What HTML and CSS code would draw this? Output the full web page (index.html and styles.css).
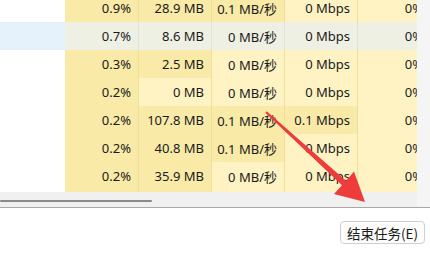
FILE: index.html
```html
<!DOCTYPE html>
<html lang="zh-CN">

<head>
    <meta charset="UTF-8">
    <meta name="viewport" content="width=device-width, initial-scale=1.0">
    <title>任务管理器</title>
    <link rel="stylesheet" href="styles.css">
</head>

<body>
    <div class="window">
        <div class="list-area">
            <div class="list">
                <div class="rows">
                    <div class="row">
                        <div class="cell name"></div>
                        <div class="cell mid">0.9%</div>
                        <div class="cell mid">28.9 MB</div>
                        <div class="cell mid">0.1 MB/秒</div>
                        <div class="cell low">0 Mbps</div>
                        <div class="cell low">0%</div>
                    </div>
                    <div class="row selected">
                        <div class="cell name"></div>
                        <div class="cell">0.7%</div>
                        <div class="cell">8.6 MB</div>
                        <div class="cell">0 MB/秒</div>
                        <div class="cell">0 Mbps</div>
                        <div class="cell">0%</div>
                    </div>
                    <div class="row">
                        <div class="cell name"></div>
                        <div class="cell mid">0.3%</div>
                        <div class="cell mid">2.5 MB</div>
                        <div class="cell low">0 MB/秒</div>
                        <div class="cell low">0 Mbps</div>
                        <div class="cell low">0%</div>
                    </div>
                    <div class="row">
                        <div class="cell name"></div>
                        <div class="cell mid">0.2%</div>
                        <div class="cell low">0 MB</div>
                        <div class="cell low">0 MB/秒</div>
                        <div class="cell low">0 Mbps</div>
                        <div class="cell low">0%</div>
                    </div>
                    <div class="row">
                        <div class="cell name"></div>
                        <div class="cell mid">0.2%</div>
                        <div class="cell mid">107.8 MB</div>
                        <div class="cell mid">0.1 MB/秒</div>
                        <div class="cell mid">0.1 Mbps</div>
                        <div class="cell low">0%</div>
                    </div>
                    <div class="row">
                        <div class="cell name"></div>
                        <div class="cell mid">0.2%</div>
                        <div class="cell mid">40.8 MB</div>
                        <div class="cell mid">0.1 MB/秒</div>
                        <div class="cell low">0 Mbps</div>
                        <div class="cell low">0%</div>
                    </div>
                    <div class="row">
                        <div class="cell name"></div>
                        <div class="cell mid">0.2%</div>
                        <div class="cell mid">35.9 MB</div>
                        <div class="cell low">0 MB/秒</div>
                        <div class="cell low">0 Mbps</div>
                        <div class="cell low">0%</div>
                    </div>
                    <div class="row">
                        <div class="cell name"></div>
                        <div class="cell mid"></div>
                        <div class="cell mid"></div>
                        <div class="cell low"></div>
                        <div class="cell low"></div>
                        <div class="cell low"></div>
                    </div>
                </div>
                <div class="hscroll">
                    <div class="hscroll-thumb"></div>
                </div>
            </div>
            <div class="vscroll"></div>
        </div>

        <footer class="footer">
            <button class="end-task">结束任务(E)</button>
        </footer>

        <!-- annotation arrow drawn over the screenshot -->
        <svg class="arrow" width="430" height="253" viewBox="0 0 430 253">
            <polygon fill="#ee3b3b"
                points="266.7,111.3 346,180.8 354,171.5 365,202 334,194 342,185.2 265.3,112.7" />
        </svg>
    </div>
</body>

</html>
```

FILE: styles.css
```css
* {
    margin: 0;
    padding: 0;
    box-sizing: border-box;
}

body {
    font-family: "Noto Sans", "Noto Sans CJK SC", sans-serif;
    font-size: 13px;
    color: #1a1a1a;
    background: #fff;
    width: 430px;
    height: 253px;
    overflow: hidden;
}

.window {
    position: relative;
    height: 253px;
}

.list-area {
    display: flex;
    height: 208px;
    border-bottom: 1px solid #a8a8a8;
}

.list {
    width: 417px;
    display: flex;
    flex-direction: column;
    overflow: hidden;
}

.rows {
    height: 192px;
    overflow: hidden;
}

.rows .row:first-child {
    margin-top: -6px;
}

.row {
    display: grid;
    grid-template-columns: 65px 74px 73px 73px 73px 73px;
    height: 28px;
}

.cell {
    display: flex;
    align-items: center;
    justify-content: flex-end;
    padding-right: 7px;
    border-right: 1px solid #efdf9c;
    white-space: nowrap;
}

.cell.name {
    background: #fff;
    border-right: none;
}

.cell.mid {
    background: #f9eaa8;
}

.cell.low {
    background: #fff3c4;
}

.row.selected .cell {
    background: #eff0e4;
    border-right-color: #e4e4d6;
}

.row.selected .cell.name {
    background: #e5f1fb;
}

.hscroll {
    flex: 1;
    background: #f0f0f0;
    position: relative;
}

.hscroll-thumb {
    position: absolute;
    left: 0;
    top: 8px;
    width: 152px;
    height: 2px;
    background: #8a8a8a;
    border-radius: 1px;
}

.vscroll {
    flex: 1;
    background: #f5f5f5;
}

.footer {
    display: flex;
    justify-content: flex-end;
    padding: 13px 5px 0 0;
}

.end-task {
    font-family: "Noto Sans CJK SC", sans-serif;
    font-size: 13.5px;
    height: 23px;
    padding: 0 6px;
    color: #1a1a1a;
    background: #fdfdfd;
    border: 1px solid #cfcfcf;
    border-radius: 4px;
    line-height: 20px;
}

.arrow {
    position: absolute;
    left: 0;
    top: 0;
    pointer-events: none;
}
```
